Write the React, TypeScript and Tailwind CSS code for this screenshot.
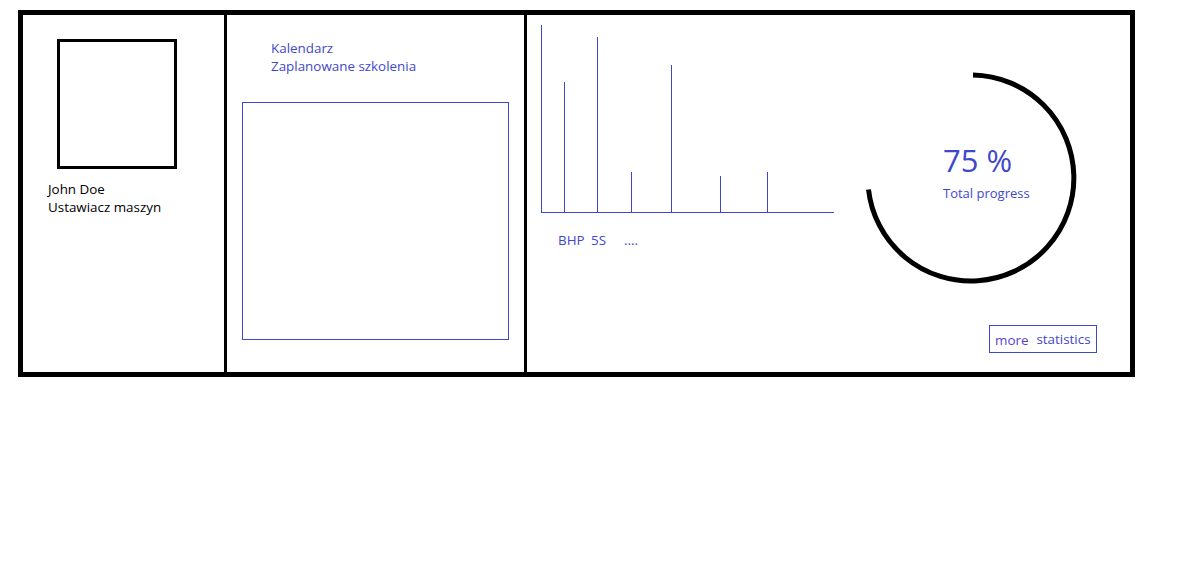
import React from "react";

const BLUE = "#3F48CC";

function BarChart() {
  const bars = [
    { x: 23, top: 57 },
    { x: 56, top: 12 },
    { x: 90, top: 147 },
    { x: 130, top: 40 },
    { x: 179, top: 151 },
    { x: 226, top: 147 },
  ];
  return (
    <svg width="294" height="189" viewBox="0 0 294 189" className="block">
      <line x1="0.5" y1="0" x2="0.5" y2="188" stroke={BLUE} strokeWidth="1" />
      <line x1="0" y1="187.5" x2="293" y2="187.5" stroke={BLUE} strokeWidth="1" />
      {bars.map((b, i) => (
        <line key={i} x1={b.x + 0.5} y1={b.top} x2={b.x + 0.5} y2="187" stroke={BLUE} strokeWidth="1" />
      ))}
    </svg>
  );
}

function ProgressRing() {
  return (
    <div className="relative w-[220px] h-[220px]">
      <svg width="220" height="220" viewBox="0 0 220 220" className="block">
        <path
          d="M 111 7 A 103 103 0 1 1 6.5 121.48"
          fill="none"
          stroke="#000"
          strokeWidth="5"
        />
      </svg>
      <div className="absolute left-[81px] top-[77px] flex flex-col text-[#3F48CC]">
        <span className="text-[31px] leading-[31px]">75 %</span>
        <span className="text-[13px] leading-[18px] mt-[8px]">Total progress</span>
      </div>
    </div>
  );
}

export default function App() {
  return (
    <div
      className="w-full h-[576px] bg-white pt-[10px] pl-[18px]"
      style={{ fontFamily: '"Open Sans", "Noto Sans", sans-serif' }}
    >
      <div className="w-[1117px] h-[367px] border-[5px] border-black flex">
        {/* Column 1: profile */}
        <div className="w-[204px] border-r-[3px] border-black flex flex-col">
          <div className="ml-[34px] mt-[24px] w-[120px] h-[130px] border-[3px] border-black" />
          <div className="ml-[25px] mt-[11px] text-[13.4px] leading-[18px] text-black">
            <div>John Doe</div>
            <div>Ustawiacz maszyn</div>
          </div>
        </div>

        {/* Column 2: calendar */}
        <div className="w-[300px] border-r-[3px] border-black flex flex-col">
          <div className="ml-[44px] mt-[24px] text-[13.4px] leading-[18px] text-[#3F48CC]">
            <div>Kalendarz</div>
            <div>Zaplanowane szkolenia</div>
          </div>
          <div className="ml-[15px] mt-[27px] w-[267px] h-[238px] border border-[#3F48CC]" />
        </div>

        {/* Column 3: statistics */}
        <div className="flex-1 flex flex-col">
          <div className="flex">
            <div className="pl-[14px] pt-[10px] w-[308px]">
              <BarChart />
              <div className="flex pl-[17px] mt-[17px] text-[13.4px] leading-[18px] text-[#3F48CC]">
                <span className="w-[33px]">BHP</span>
                <span className="w-[33px]">5S</span>
                <span className="w-[33px]">....</span>
              </div>
            </div>
            <div className="ml-[27px] mt-[53px]">
              <ProgressRing />
            </div>
          </div>
          <div className="mt-auto self-end mr-[33px] mb-[19px] w-[108px] h-[28px] border border-[#3F48CC] flex items-center pl-[5px] text-[13.4px] leading-[18px] text-[#3F48CC]">
            <span className="relative top-[1px] text-[#5a3fcf]">more</span>
            <span className="ml-[8px]">statistics</span>
          </div>
        </div>
      </div>
    </div>
  );
}
